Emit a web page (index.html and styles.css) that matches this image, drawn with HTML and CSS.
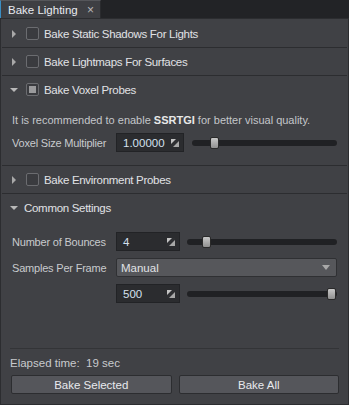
FILE: index.html
```html
<!DOCTYPE html>
<html>
<head>
<meta charset="utf-8">
<link rel="stylesheet" href="styles.css">
</head>
<body>
<div class="window">
  <div class="tabbar">
    <div class="tab"><span class="tab-title">Bake Lighting</span><span class="tab-close">×</span></div>
  </div>
  <div class="panel">
    <div class="section">
      <div class="header">
        <span class="arrow right"></span><span class="check"></span><span class="label">Bake Static Shadows For Lights</span>
      </div>
    </div>
    <div class="section">
      <div class="header">
        <span class="arrow right"></span><span class="check"></span><span class="label">Bake Lightmaps For Surfaces</span>
      </div>
    </div>
    <div class="section open voxel">
      <div class="header">
        <span class="arrow down"></span><span class="check partial"></span><span class="label">Bake Voxel Probes</span>
      </div>
      <div class="body">
        <div class="note">It is recommended to enable <b>SSRTGI</b> for better visual quality.</div>
        <div class="prop">
          <span class="prop-name">Voxel Size Multiplier</span>
          <span class="field wide"><span class="val">1.00000</span><svg class="drag" width="8" height="8" viewBox="0 0 8 8"><rect width="8" height="8" fill="#2e2f32"/><path d="M0 0H5L0 5Z" fill="#c4c4c4"/><path d="M8 2V8H2Z" fill="#a8a8a8"/></svg></span>
          <span class="slider"><span class="track"></span><span class="thumb" style="left:18px"></span></span>
        </div>
      </div>
    </div>
    <div class="section">
      <div class="header">
        <span class="arrow right"></span><span class="check"></span><span class="label">Bake Environment Probes</span>
      </div>
    </div>
    <div class="section open common">
      <div class="header">
        <span class="arrow down"></span><span class="label nocheck">Common Settings</span>
      </div>
      <div class="body">
        <div class="prop">
          <span class="prop-name">Number of Bounces</span>
          <span class="field"><span class="val">4</span><svg class="drag" width="8" height="8" viewBox="0 0 8 8"><rect width="8" height="8" fill="#2e2f32"/><path d="M0 0H5L0 5Z" fill="#c4c4c4"/><path d="M8 2V8H2Z" fill="#a8a8a8"/></svg></span>
          <span class="slider s2"><span class="track"></span><span class="thumb" style="left:15px"></span></span>
        </div>
        <div class="prop combo-row">
          <span class="prop-name">Samples Per Frame</span>
          <span class="combo"><span class="val">Manual</span><span class="combo-arrow"></span></span>
        </div>
        <div class="prop last">
          <span class="prop-name"></span>
          <span class="field"><span class="val">500</span><svg class="drag" width="8" height="8" viewBox="0 0 8 8"><rect width="8" height="8" fill="#2e2f32"/><path d="M0 0H5L0 5Z" fill="#c4c4c4"/><path d="M8 2V8H2Z" fill="#a8a8a8"/></svg></span>
          <span class="slider s2"><span class="track"></span><span class="thumb" style="left:140px"></span></span>
        </div>
      </div>
    </div>
    <div class="spacer"></div>
    <div class="footer">
      <div class="elapsed">Elapsed time:&nbsp; 19 sec</div>
      <div class="buttons">
        <button class="btn">Bake Selected</button>
        <button class="btn">Bake All</button>
      </div>
    </div>
  </div>
</div>
</body>
</html>
```

FILE: styles.css
```css
* { box-sizing: border-box; }
html, body { margin: 0; padding: 0; }
body {
  width: 349px;
  height: 405px;
  background: #242528;
  font-family: "Liberation Sans", Arial, sans-serif;
  font-size: 11px;
  color: #d6d6d6;
  overflow: hidden;
  white-space: nowrap;
}
.window { display: flex; flex-direction: column; height: 405px; }
.tabbar {
  height: 18px;
  background: #222326;
  display: flex;
  align-items: flex-end;
  flex: none;
}
.tab {
  width: 101px;
  height: 18px;
  background: #3e3f43;
  border-left: 1px solid #3a8ec4;
  border-top: 1px solid #55565a;
  border-right: 1px solid #2a2b2e;
  display: flex;
  align-items: center;
  justify-content: space-between;
  padding: 0 6px 0 7px;
  color: #e8eaf0;
  font-size: 11.5px;
}
.tab-close { color: #b8b8b8; font-size: 12px; }
.panel {
  flex: 1;
  background: #404145;
  border: 1px solid #2c2d30;
  display: flex;
  flex-direction: column;
  padding: 1px 1px 0 1px;
}
.section { border-bottom: 1px solid #2c2d30; }
.header {
  height: 27px;
  display: flex;
  align-items: center;
  padding-left: 8px;
}
.arrow { width: 10px; height: 10px; position: relative; flex: none; }
.arrow.right::before {
  content: ""; position: absolute; left: 2px; top: 1px;
  border-left: 4px solid #a8a8a8;
  border-top: 4px solid transparent;
  border-bottom: 4px solid transparent;
}
.arrow.down::before {
  content: ""; position: absolute; left: 0; top: 3px;
  border-top: 4px solid #b8b8b8;
  border-left: 4px solid transparent;
  border-right: 4px solid transparent;
}
.check {
  width: 13px; height: 13px; flex: none;
  margin-left: 6px;
  border: 1px solid #6b6c70;
  border-radius: 2px;
  background: #3a3b3f;
  position: relative;
}
.check.partial::before {
  content: ""; position: absolute; left: 2px; top: 2px; width: 7px; height: 7px;
  background: #9a9a9c;
}
.label { margin-left: 5px; font-size: 11.5px; letter-spacing: -0.3px; color: #e0e2e6; }
.label.nocheck { margin-left: 4px; }
.body { padding: 0 9px 0 10px; }
.voxel .body { padding-top: 9px; padding-bottom: 13px; }
.note { color: #c4c6ca; font-size: 11px; height: 16px; line-height: 16px; margin-bottom: 5px; }
.note b { color: #e8e8e8; }
.prop { display: flex; align-items: center; height: 19px; }
.prop-name { width: 104px; flex: none; color: #c8cacd; font-size: 11px; letter-spacing: -0.2px; }
.combo-row { margin-top: 7px; }
.prop.last { margin-top: 7px; }
.field {
  width: 64px; height: 19px; flex: none;
  background: #2b2c2f;
  border: 1px solid #222326;
  display: flex; align-items: center; justify-content: space-between;
  padding: 0 4px 0 6px;
  color: #d4e0ee;
  font-size: 11.5px;
}
.field.wide { width: 68px; }
.drag { flex: none; }
.slider { flex: 1; height: 12px; position: relative; margin-left: 8px; margin-right: 1px; }
.slider.s2 { margin-left: 7px; }
.track {
  position: absolute; left: 0; right: 0; top: 3px; height: 6px;
  background: #202124; border-radius: 3px;
}
.thumb {
  position: absolute; top: 0; width: 9px; height: 12px;
  background: linear-gradient(#c8c8c8, #909090);
  border: 1px solid #2a2a2a; border-radius: 2px;
}
.common .body { padding-top: 11px; }
.combo {
  flex: 1; height: 19px; margin-right: 1px;
  background: #56575b;
  border: 1px solid #2f3033;
  border-radius: 2px;
  display: flex; align-items: center; justify-content: space-between;
  padding: 0 6px 0 4px;
  color: #e0e2e6; font-size: 11.5px;
}
.combo-arrow {
  width: 0; height: 0;
  border-top: 5px solid #a8a8a8;
  border-left: 4px solid transparent;
  border-right: 4px solid transparent;
}
.common { border-bottom: none; }
.spacer { flex: 1; }
.footer { padding: 0 8px 10px 8px; }
.elapsed {
  border-top: 1px solid #333437;
  padding: 8px 0 0 0;
  height: 27px;
  color: #c8cacd; font-size: 11.5px;
}
.buttons { display: flex; gap: 7px; padding-left: 1px; }
.btn {
  flex: 1; height: 19px;
  background: #55565b;
  border: 1px solid #2c2d30;
  border-radius: 2px;
  color: #e8eaee;
  font-family: "Liberation Sans", Arial, sans-serif;
  font-size: 11.5px;
  padding: 0;
}
```
